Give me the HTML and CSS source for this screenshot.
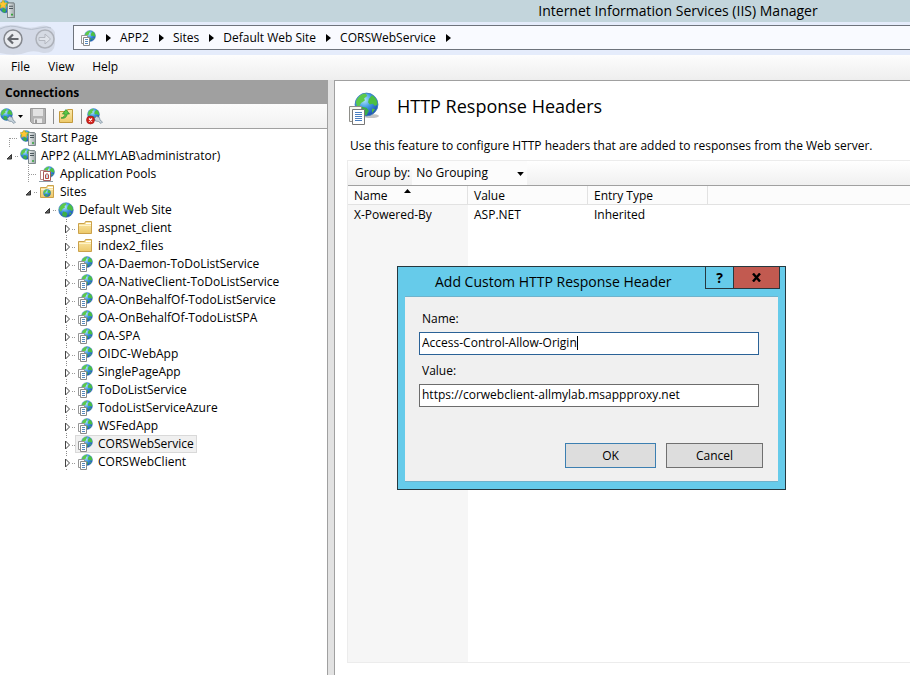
FILE: index.html
```html
<!DOCTYPE html>
<html lang="en">
<head>
<meta charset="utf-8">
<title>Internet Information Services (IIS) Manager</title>
<link rel="stylesheet" href="styles.css">
</head>
<body>
<svg class="defs" aria-hidden="true">
  <defs>
    <radialGradient id="sea" cx=".4" cy=".3" r=".75">
      <stop offset="0" stop-color="#b5eafc"/><stop offset=".45" stop-color="#3f98e4"/><stop offset="1" stop-color="#1846ac"/>
    </radialGradient>
    <linearGradient id="gold" x1="0" y1="0" x2="0" y2="1">
      <stop offset="0" stop-color="#fbe9ac"/><stop offset="1" stop-color="#ecc868"/>
    </linearGradient>
    <linearGradient id="metal" x1="0" y1="0" x2="1" y2="0">
      <stop offset="0" stop-color="#eef1f2"/><stop offset="1" stop-color="#9da6a9"/>
    </linearGradient>
    <symbol id="globe" viewBox="0 0 16 16">
      <circle cx="8" cy="8" r="7.3" fill="url(#sea)" stroke="#3f7fbe" stroke-width=".6"/>
      <path d="M1.2 6.500C2 3.500 4.500 1.200 7.500 1l1 1.500-2 1.500 .5 1.500-2.500 1.500L3.500 9 2 9.500z" fill="#5cc94a"/>
      <path d="M9.500 4.500l2-2.500c2 1 3.500 3 3.500 6l-1.500 1-1.500-1.500-2 .5-1-1.500z" fill="#4cc042"/>
      <path d="M5 9.500l3 .5 1.500 2L8 15c-2-.2-3.500-1-4-2z" fill="#3bae48"/>
      <path d="M11.500 10.500l2 .5-2 2.500z" fill="#4fbd3e"/>
    </symbol>
    <symbol id="site" viewBox="0 0 16 16">
      <svg x="4" y="0" width="12" height="12"><use href="#globe"/></svg>
      <path d="M1.500 5.500h6v8h-6z" fill="#fff" stroke="#979797"/>
      <path d="M3.500 7.500h6v8h-6z" fill="#fff" stroke="#8a8a8a"/>
      <path d="M5 9.500h3M5 11.500h3M5 13.500h3" stroke="#5688bd"/>
    </symbol>
    <symbol id="feature" viewBox="0 0 32 34">
      <ellipse cx="22" cy="24" rx="8" ry="2" fill="#c4c4c4"/>
      <svg x="5" y="0" width="25" height="25" viewBox="0 0 16 16"><use href="#globe"/></svg>
      <path d="M.5 14.500h12v15H.5z" fill="#f8f8f2" stroke="#8f8f8a"/>
      <path d="M3.500 17.500h12v15h-12z" fill="#fff" stroke="#777"/>
      <path d="M6 20.500h7M6 22.500h7M6 24.500h7M6 26.500h7M6 28.500h7" stroke="#4a7fc0"/>
    </symbol>
    <symbol id="server" viewBox="0 0 16 16">
      <svg x="0" y="0" width="12" height="12"><use href="#globe"/></svg>
      <path d="M8.500 3.500l1-1h5l1 1v12h-7z" fill="url(#metal)" stroke="#7f898c"/>
      <path d="M10 5.500h4M10 7.500h4" stroke="#4c585d"/>
      <path d="M12 13h2" stroke="#36a43c" stroke-width="1.500"/>
    </symbol>
    <symbol id="start" viewBox="0 0 16 16">
      <use href="#server"/>
      <path d="M4 0l1.200 2.400L8 2.800 6 4.700l.5 2.800L4 6.200 1.500 7.500 2 4.700 0 2.800l2.800-.4z" fill="#ffc832" stroke="#e09c18" stroke-width=".5"/>
    </symbol>
    <symbol id="pools" viewBox="0 0 16 16">
      <svg x="4" y="0" width="12" height="12"><use href="#globe"/></svg>
      <path d="M1.500 4.500h6v9h-6z" fill="#fff" stroke="#b98a8a"/>
      <path d="M4.500 5.500h7v9h-7z" fill="#fff" stroke="#a65c5c"/>
      <path d="M6.500 12.500V9l1.500-1.500L9.500 9v3.500z" fill="#c9d9e8" stroke="#b84a42"/>
      <path d="M0 15.500h14" stroke="#8f9da8"/>
    </symbol>
    <symbol id="folder" viewBox="0 0 16 16">
      <path d="M1.500 3.500h6l1-2h6v12h-13z" fill="url(#gold)" stroke="#cba14a"/>
      <path d="M9 3.500h5" stroke="#fff"/>
      <path d="M2 5.500h12" stroke="#fff3c8"/>
    </symbol>
    <symbol id="sites" viewBox="0 0 16 16">
      <use href="#folder"/>
      <svg x="4" y="5" width="8" height="8"><use href="#globe"/></svg>
    </symbol>
    <symbol id="open" viewBox="0 0 14 18">
      <path d="M7.500 7.500v4.500h-4.500z" fill="#606060" stroke="#333"/>
      <path d="M11 9.500h3" stroke="#999" stroke-dasharray="1 1"/>
    </symbol>
    <symbol id="closed" viewBox="0 0 14 18">
      <path d="M5.500 0v3M5.500 16v2" stroke="#888" stroke-dasharray="1 1"/>
      <path d="M4.500 6v8l4-4z" fill="#fff" stroke="#444"/>
      <path d="M11 10.500h3" stroke="#999" stroke-dasharray="1 1"/>
    </symbol>
    <symbol id="leaf" viewBox="0 0 14 18">
      <path d="M5.500 0v18" stroke="#999" stroke-dasharray="1 1"/>
      <path d="M6 9.500h8" stroke="#999" stroke-dasharray="1 1"/>
    </symbol>
    <symbol id="leaf-first" viewBox="0 0 14 18">
      <path d="M5.500 9v9" stroke="#999" stroke-dasharray="1 1"/>
      <path d="M6 9.500h8" stroke="#999" stroke-dasharray="1 1"/>
    </symbol>
    <symbol id="arrow" viewBox="0 0 5 8"><path d="M0 0l5 4-5 4z"/></symbol>
    <symbol id="down" viewBox="0 0 5 3"><path d="M0 0h5L2.500 3z"/></symbol>
    <symbol id="lens" viewBox="0 0 16 16">
      <svg x="0" y="0" width="13" height="13"><use href="#globe"/></svg>
      <path d="M7.500 10.500l2-2 3 1 .5 2.500 2.500 2-1.500 1.500-2.500-2-3-.5z" fill="#c6d3dc" stroke="#7d909e" stroke-width=".8"/>
    </symbol>
  </defs>
</svg>

<div class="window">
  <header class="titlebar">
    <svg class="app-icon" width="15" height="18" viewBox="1 0 15 16" preserveAspectRatio="none" aria-hidden="true"><use href="#start" width="16" height="16"/></svg>
    <h1>Internet Information Services (IIS) Manager</h1>
  </header>

  <nav class="navbar" aria-label="Location">
    <div class="history">
      <svg class="history-plate" width="56" height="32" aria-hidden="true">
        <path d="M0 3q12-4 24 0 8 2 16-1 10-2 15 6v12q-1 10-12 9-8-3-15-1-12 5-28 1z" fill="#d3d9e6"/>
        <path d="M0 5q10-5 22-1 10 3 18 0 7-2 11 0" fill="none" stroke="#b7bfcd"/>
      </svg>
      <button type="button" class="back" aria-label="Back">
        <svg width="22" height="22" viewBox="0 0 22 22"><circle cx="11" cy="11" r="9" fill="#e9ebef" stroke="#85888f" stroke-width="1.500"/><path d="M16.500 11H7M11 6.500L6.500 11l4.500 4.500" fill="none" stroke="#66696f" stroke-width="2.200"/></svg>
      </button>
      <button type="button" class="forward" aria-label="Forward">
        <svg width="22" height="22" viewBox="0 0 22 22"><circle cx="11" cy="11" r="9" fill="#d5dae3" stroke="#adb1b9" stroke-width="1.500"/><path d="M5 9.500h6V6l5.500 5-5.500 5v-3.500H5z" fill="#dfe3ea" stroke="#b3b7bf"/></svg>
      </button>
    </div>
    <div class="address">
      <svg width="16" height="16" aria-hidden="true"><use href="#site"/></svg>
      <svg class="sep" width="5" height="8" aria-hidden="true"><use href="#arrow"/></svg>
      <button type="button">APP2</button>
      <svg class="sep" width="5" height="8" aria-hidden="true"><use href="#arrow"/></svg>
      <button type="button">Sites</button>
      <svg class="sep" width="5" height="8" aria-hidden="true"><use href="#arrow"/></svg>
      <button type="button">Default Web Site</button>
      <svg class="sep" width="5" height="8" aria-hidden="true"><use href="#arrow"/></svg>
      <button type="button">CORSWebService</button>
      <svg class="sep" width="5" height="8" aria-hidden="true"><use href="#arrow"/></svg>
    </div>
  </nav>

  <div class="menubar">
    <button type="button">File</button>
    <button type="button">View</button>
    <button type="button">Help</button>
  </div>

  <div class="panes">
    <aside class="connections">
      <h2>Connections</h2>
      <div class="toolbar">
        <button type="button" class="connect" aria-label="Connect">
          <svg width="16" height="16"><use href="#lens"/></svg>
          <svg width="5" height="3"><use href="#down"/></svg>
        </button>
        <button type="button" aria-label="Save">
          <svg width="16" height="16" viewBox="0 0 16 16"><path d="M.5.500h15v15h-13l-2-2z" fill="#b4b4b4" stroke="#999"/><path d="M3 1h10v7H3z" fill="#e2e2e2"/><path d="M4 10.500h8V15H4z" fill="#e9e9e9"/><path d="M5 11.500h2V15H5z" fill="#999"/></svg>
        </button>
        <span class="divider"></span>
        <button type="button" aria-label="Up">
          <svg width="16" height="16" viewBox="0 0 16 16"><path d="M1.500 3.500h7l1-2h5v13h-13z" fill="url(#gold)" stroke="#c39a3c"/><path d="M3 10c2.500-.5 4-2 4-4H4.500L8 1.500 11.500 6 9 6C9 9 6.500 11 3 10z" fill="#5cc646" stroke="#238b25" stroke-width=".7"/></svg>
        </button>
        <span class="divider"></span>
        <button type="button" aria-label="Disconnect">
          <svg width="17" height="17" viewBox="0 0 17 17"><svg x="1" width="16" height="16" viewBox="0 0 16 16"><use href="#lens"/></svg><circle cx="4.500" cy="12" r="4" fill="#d5211c" stroke="#981410" stroke-width=".6"/><path d="M3 10.500l3 3m0-3l-3 3" stroke="#fff" stroke-width="1.300"/></svg>
        </button>
      </div>
      <ul class="tree">
        <li><div class="row"><svg class="twig"><use href="#leaf-first"/></svg><button type="button" class="node"><svg class="icon"><use href="#start"/></svg>Start Page</button></div></li>
        <li><div class="row"><svg class="twig"><use href="#open"/></svg><button type="button" class="node"><svg class="icon"><use href="#server"/></svg>APP2 (ALLMYLAB\administrator)</button></div>
          <ul>
            <li><div class="row"><svg class="twig"><use href="#leaf"/></svg><button type="button" class="node"><svg class="icon"><use href="#pools"/></svg>Application Pools</button></div></li>
            <li><div class="row"><svg class="twig"><use href="#open"/></svg><button type="button" class="node"><svg class="icon"><use href="#sites"/></svg>Sites</button></div>
              <ul>
                <li><div class="row"><svg class="twig"><use href="#open"/></svg><button type="button" class="node"><svg class="icon"><use href="#globe"/></svg>Default Web Site</button></div>
                  <ul>
                    <li><div class="row"><svg class="twig"><use href="#closed"/></svg><button type="button" class="node"><svg class="icon"><use href="#folder"/></svg>aspnet_client</button></div></li>
                    <li><div class="row"><svg class="twig"><use href="#closed"/></svg><button type="button" class="node"><svg class="icon"><use href="#folder"/></svg>index2_files</button></div></li>
                    <li><div class="row"><svg class="twig"><use href="#closed"/></svg><button type="button" class="node"><svg class="icon"><use href="#site"/></svg>OA-Daemon-ToDoListService</button></div></li>
                    <li><div class="row"><svg class="twig"><use href="#closed"/></svg><button type="button" class="node"><svg class="icon"><use href="#site"/></svg>OA-NativeClient-ToDoListService</button></div></li>
                    <li><div class="row"><svg class="twig"><use href="#closed"/></svg><button type="button" class="node"><svg class="icon"><use href="#site"/></svg>OA-OnBehalfOf-TodoListService</button></div></li>
                    <li><div class="row"><svg class="twig"><use href="#closed"/></svg><button type="button" class="node"><svg class="icon"><use href="#site"/></svg>OA-OnBehalfOf-TodoListSPA</button></div></li>
                    <li><div class="row"><svg class="twig"><use href="#closed"/></svg><button type="button" class="node"><svg class="icon"><use href="#site"/></svg>OA-SPA</button></div></li>
                    <li><div class="row"><svg class="twig"><use href="#closed"/></svg><button type="button" class="node"><svg class="icon"><use href="#site"/></svg>OIDC-WebApp</button></div></li>
                    <li><div class="row"><svg class="twig"><use href="#closed"/></svg><button type="button" class="node"><svg class="icon"><use href="#site"/></svg>SinglePageApp</button></div></li>
                    <li><div class="row"><svg class="twig"><use href="#closed"/></svg><button type="button" class="node"><svg class="icon"><use href="#site"/></svg>ToDoListService</button></div></li>
                    <li><div class="row"><svg class="twig"><use href="#closed"/></svg><button type="button" class="node"><svg class="icon"><use href="#site"/></svg>TodoListServiceAzure</button></div></li>
                    <li><div class="row"><svg class="twig"><use href="#closed"/></svg><button type="button" class="node"><svg class="icon"><use href="#site"/></svg>WSFedApp</button></div></li>
                    <li><div class="row"><svg class="twig"><use href="#closed"/></svg><button type="button" class="node selected"><svg class="icon"><use href="#site"/></svg>CORSWebService</button></div></li>
                    <li><div class="row"><svg class="twig"><use href="#closed"/></svg><button type="button" class="node"><svg class="icon"><use href="#site"/></svg>CORSWebClient</button></div></li>
                  </ul>
                </li>
              </ul>
            </li>
          </ul>
        </li>
      </ul>
    </aside>

    <main class="content">
      <div class="heading">
        <svg width="32" height="34" aria-hidden="true"><use href="#feature"/></svg>
        <h2>HTTP Response Headers</h2>
      </div>
      <p class="intro">Use this feature to configure HTTP headers that are added to responses from the Web server.</p>
      <section class="list">
        <div class="grouping">
          <label for="group">Group by:</label>
          <div class="picker">
            <select id="group"><option>No Grouping</option></select>
            <svg width="7" height="4" aria-hidden="true"><use href="#down"/></svg>
          </div>
        </div>
        <div class="grid">
          <table>
            <thead>
              <tr><th>Name<svg class="sort" width="7" height="4" viewBox="0 0 7 4" aria-hidden="true"><path d="M0 4L3.500 0 7 4z"/></svg></th><th>Value</th><th>Entry Type</th><th class="rest"></th></tr>
            </thead>
            <tbody>
              <tr><td>X-Powered-By</td><td>ASP.NET</td><td>Inherited</td><td></td></tr>
            </tbody>
          </table>
        </div>
      </section>
    </main>
  </div>

  <form class="dialog" role="dialog" aria-labelledby="dialog-title">
    <div class="dialog-bar">
      <h2 id="dialog-title">Add Custom HTTP Response Header</h2>
      <div class="caption">
        <button type="button" class="help" aria-label="Help">?</button>
        <button type="button" class="close" aria-label="Close"><svg width="9" height="9" viewBox="0 0 9 9"><path d="M1 .5l7 8M8 .5l-7 8" stroke="#000" stroke-width="2.400"/></svg></button>
      </div>
    </div>
    <div class="dialog-body">
      <label for="header-name">Name:</label>
      <div class="field">
        <input id="header-name" class="focused" type="text" value="Access-Control-Allow-Origin">
        <span class="caret"></span>
      </div>
      <label for="header-value">Value:</label>
      <div class="field">
        <input id="header-value" type="text" value="https://corwebclient-allmylab.msappproxy.net">
      </div>
      <div class="actions">
        <button type="button" class="ok">OK</button>
        <button type="button" class="cancel">Cancel</button>
      </div>
    </div>
  </form>
</div>
</body>
</html>
```
FILE: styles.css
```css
* { box-sizing: border-box; }

body {
  margin: 0;
  background: #f0f0f0;
  color: #000;
  font: 12px/18px "Open Sans", "Noto Sans", sans-serif;
}

h1, h2, p, ul { margin: 0; padding: 0; font-weight: 400; }
ul { list-style: none; }
svg { flex: none; display: block; }
.defs { position: absolute; width: 0; height: 0; }

button, input, select {
  margin: 0;
  padding: 0;
  border: 0;
  border-radius: 0;
  background: none;
  color: inherit;
  font: inherit;
  outline: 0;
}

.window {
  position: relative;
  display: flex;
  flex-direction: column;
  min-height: 100vh;
  overflow: hidden;
}

.titlebar {
  display: flex;
  align-items: flex-start;
  height: 22px;
  background: #c3d5dc;
}
.titlebar h1 {
  flex: 1;
  padding-left: 431px;
  font-size: 14px;
  line-height: 22px;
  text-align: center;
  white-space: nowrap;
}

.navbar {
  display: flex;
  height: 33px;
  padding-top: 3px;
  background: #e5ecfb;
}
.history {
  position: relative;
  display: flex;
  gap: 10px;
  width: 73px;
  padding: 3px 2px;
}
.history-plate { position: absolute; top: -1px; left: 0; }
.history button { position: relative; height: 22px; }
.address {
  flex: 1;
  display: flex;
  align-items: center;
  height: 25px;
  padding-left: 6px;
  border: 1px solid #6e737c;
  border-right: 0;
  background: #f9faff;
}
.address button { height: 23px; line-height: 21px; }
.address .sep { margin: 0 9px 0 10px; }

.menubar {
  display: flex;
  gap: 18px;
  height: 25px;
  padding-left: 11px;
  background: linear-gradient(#fdfdfd, #eeeeee);
}
.menubar button { height: 24px; }

.panes {
  flex: 1;
  display: flex;
  gap: 6px;
  background: #e2e2e2;
}

.connections {
  flex: none;
  width: 328px;
  border-right: 1px solid #a0a0a0;
  background: #fff;
}
.connections h2 {
  height: 24px;
  padding-left: 5px;
  background: #a0a0a0;
  font-size: 12px;
  font-weight: 700;
  line-height: 25px;
}
.toolbar {
  display: flex;
  align-items: center;
  gap: 7px;
  height: 25px;
  border-bottom: 1px solid #a0a0a0;
  background: linear-gradient(#fcfcfc, #f1f1f1);
}
.connect { display: flex; align-items: center; gap: 2px; }
.divider { width: 1px; height: 15px; background: #8c8c8c; }
.toolbar .divider + button { margin-left: -3px; }

.tree { padding-left: 4px; }
.tree ul { padding-left: 19px; }
.row { display: flex; height: 18px; }
.twig { width: 14px; height: 18px; }
.node {
  display: flex;
  align-items: center;
  gap: 5px;
  height: 18px;
  padding: 0 2px 0 1px;
  border: 1px solid transparent;
  line-height: 16px;
  white-space: nowrap;
}
.icon { width: 16px; height: 16px; }
.selected { border-color: #d9d9d9; background: #f0f0f0; }

.content {
  flex: 1;
  display: flex;
  flex-direction: column;
  min-width: 0;
  padding: 11px 0 12px 12px;
  border: solid #a0a0a0;
  border-width: 1px 0 0 1px;
  background: #fff;
}
.heading { display: flex; gap: 16px; padding-left: 2px; }
.heading h2 { font-size: 18px; line-height: 28px; }
.intro { padding: 11px 0 5px 3px; white-space: nowrap; }

.list {
  flex: 1;
  display: flex;
  flex-direction: column;
  border: solid #ececec;
  border-width: 1px 0 1px 1px;
}
.grouping {
  display: flex;
  height: 25px;
  padding-left: 7px;
  border-bottom: 1px solid #a0a0a0;
  background: linear-gradient(#fff, #f0f0f0);
  line-height: 24px;
}
.picker {
  position: relative;
  margin-left: 2px;
  background: #fcfcfc;
}
.picker select { width: 115px; height: 24px; padding-left: 4px; appearance: none; }
.picker svg { position: absolute; top: 11px; right: 3px; }

.grid { flex: 1; background: linear-gradient(#f6f6f6, #f6f6f6) no-repeat 0 0 / 120px 100%; }
table { width: 100%; border-collapse: separate; border-spacing: 0; table-layout: fixed; }
th, td { width: 120px; height: 19px; padding: 0 0 0 6px; font-weight: 400; line-height: 18px; text-align: left; }
th { position: relative; padding-top: 1px; border-right: 1px solid #e2e2e2; border-bottom: 1px solid #e2e2e2; background: #fcfcfc; line-height: 17px; }
th.rest { width: auto; border-right: 0; }
.sort { position: absolute; top: 3px; left: 56px; }

.dialog {
  position: absolute;
  top: 266px;
  left: 397px;
  width: 389px;
  padding: 0 7px 7px;
  border: 1px solid #26383f;
  background: #66cbea;
}
.dialog-bar { display: flex; height: 29px; }
.dialog-bar h2 { flex: 1; padding-left: 30px; font-size: 14px; line-height: 30px; white-space: nowrap; }
.caption { display: flex; height: 22px; margin-right: -2px; border: solid #26383f; border-width: 0 1px 1px; }
.caption button { display: flex; align-items: center; justify-content: center; font-weight: 700; font-size: 14px; }
.help { width: 27px; }
.close { width: 46px; border-left: 1px solid #26383f; background: #c25a50; }
.dialog-body {
  display: flex;
  flex-direction: column;
  padding: 12px 15px 13px 14px;
  border: 1px solid #6fb3cc;
  border-width: 1px 0;
  background: #f0f0f0;
}
.dialog-body label { height: 23px; padding-left: 3px; line-height: 20px; }
.field { position: relative; height: 29px; margin-right: 4px; }
.field input {
  width: 100%;
  height: 23px;
  padding: 0 2px 2px;
  border: 1px solid #6c6c6c;
  background: #fff;
}
.field .focused { border-color: #2a6297; }
.caret { position: absolute; top: 4px; left: 158px; width: 1px; height: 14px; background: #000; }
.actions { display: flex; justify-content: flex-end; gap: 10px; padding-top: 30px; }
.actions button { width: 97px; height: 25px; border: 1px solid #707070; background: #ddd; }
.actions .ok { width: 91px; border-color: #3c7fb1; }
```
